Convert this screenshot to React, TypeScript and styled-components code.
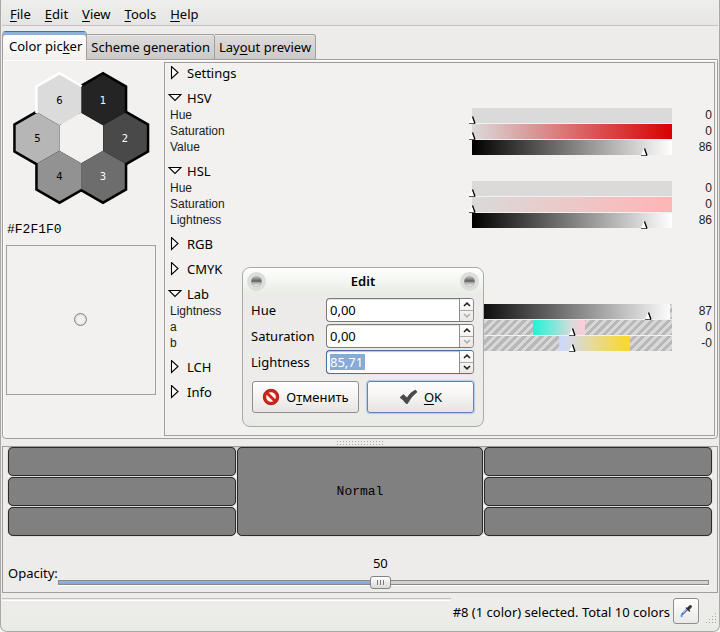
import React, { useState } from 'react';
import styled, { createGlobalStyle, css } from 'styled-components';

const GlobalStyle = createGlobalStyle`
  *, *::before, *::after { box-sizing: border-box; }
  body {
    margin: 0;
    background: #f4f5f3;
    color: #000;
    font: 13px/20px "Noto Sans", "Open Sans", sans-serif;
  }
  button, input { font: inherit; color: inherit; margin: 0; }
  u { text-decoration-thickness: 1px; text-underline-offset: 2px; }
`;

const Window = styled.div`
  position: relative;
  display: flex;
  flex-direction: column;
  min-height: 100vh;
  padding: 0 1px;
  background: linear-gradient(#ececeb, #edecea 40px, #edecea calc(100% - 26px), #e9ece6);
  border: 1px solid #a9aaa8;
  border-top: 0;
  border-radius: 0 0 7px 7px;
`;

const MenuBar = styled.nav`
  display: flex;
  height: 26px;
  padding: 4px 1px 0;
  background: linear-gradient(#eef0ec, #e5e4e2);
  border-bottom: 1px solid #c4c3c1;
`;

const MenuItem = styled.button`
  padding: 0 7px;
  height: 20px;
  border: 0;
  background: none;
`;

const TabList = styled.div`
  display: flex;
  align-items: flex-end;
  height: 34px;
  margin-bottom: -1px;
  z-index: 1;
`;

const Tab = styled.button<{ $active?: boolean }>`
  height: 26px;
  padding: 0 4px;
  border: 1px solid #a19f9d;
  border-left-width: 0;
  border-radius: 0 3px 0 0;
  background: linear-gradient(#dddcda, #cccac8);
  box-shadow: inset 0 1px #ecebea;
  white-space: nowrap;
  ${(p) =>
    p.$active &&
    css`
      height: 29px;
      padding: 0 4px 0 6px;
      border-color: #4a6f9f #a19f9d transparent;
      border-left-width: 1px;
      border-bottom: 0;
      border-radius: 4px 4px 0 0;
      background: linear-gradient(#fff, #f2f1ef);
      box-shadow: inset 0 3px #8cb0dc;
    `}
`;

const MainPanel = styled.main`
  display: flex;
  flex: 1;
  padding: 2px 2px 2px 3px;
  background: #f2f1ef;
  border: 1px solid #a19f9d;
  border-radius: 0 0 4px 4px;
  box-shadow: inset 1px 1px #fff;
`;

const SidePane = styled.section`
  display: flex;
  flex-direction: column;
  flex: none;
  width: 158px;
  padding-top: 8px;
`;

const Wheel = styled.svg`
  display: block;
  width: 150px;
  height: 138px;
`;

const HexValue = styled.div`
  margin: 12px 0 5px 1px;
  font: 13px/20px "Liberation Mono", monospace;
`;

const Field = styled.div`
  display: grid;
  place-items: center;
  width: 150px;
  height: 150px;
  padding: 0 2px 2px 0;
  border: 1px solid #a19f9d;
`;

const FieldMarker = styled.span`
  width: 13px;
  height: 13px;
  border: 1px solid #858585;
  border-radius: 50%;
  background: #f2f1ef;
  box-shadow: inset 0 0 2px #aaa;
`;

const Groups = styled.section`
  display: flex;
  flex-direction: column;
  flex: 1;
  gap: 5px;
  min-width: 0;
  min-height: 374px;
  padding: 0 2px 0 5px;
  border: 1px solid #a19f9d;
`;

const GroupHeader = styled.button`
  display: flex;
  align-items: center;
  width: 100%;
  height: 20px;
  padding: 0;
  border: 0;
  background: none;
  text-align: left;
`;

const Expander = styled.svg`
  flex: none;
  width: 14px;
  height: 14px;
  margin: 0 5px 0 -2px;
`;

const Row = styled.label`
  display: grid;
  grid-template-columns: 1fr 200px 40px;
  align-items: center;
  height: 16px;
  font: 12px/15px "Liberation Sans", Arial, sans-serif;
  color: #1c1c1c;
`;

const RowName = styled.span`
  padding-bottom: 1px;
`;

const Bar = styled.span<{ $fill: string }>`
  position: relative;
  height: 15px;
  margin-bottom: 1px;
  background: ${(p) => p.$fill};
`;

const BarInput = styled.input`
  position: absolute;
  inset: 0;
  width: 100%;
  height: 100%;
  opacity: 0;
`;

const Marker = styled.svg`
  position: absolute;
  top: 8px;
  z-index: 1;
  width: 8px;
  height: 8px;
  transform: translateX(-4px);
  pointer-events: none;
`;

const RowValue = styled.output`
  padding-bottom: 1px;
  text-align: right;
`;

const Grip = styled.div`
  width: 48px;
  height: 6px;
  margin: 1px auto 0;
  background: radial-gradient(circle, #a5a4a2 0 1px, transparent 1px) 0 0 / 3px 3px;
`;

const BottomPanel = styled.section`
  padding: 0 5px 1px;
  border: 1px solid #a19f9d;
`;

const Swatches = styled.div`
  display: grid;
  grid-template-columns: 228fr 247fr 228fr;
  grid-template-rows: repeat(3, 29px);
  gap: 1px;
  background: linear-gradient(#c4c3c1, #f6f5f4 3px);
`;

const Swatch = styled.button<{ $tall?: boolean }>`
  padding: 0;
  border: 1px solid #2b2b2b;
  border-radius: 5px;
  background: #808080;
  box-shadow: 0 0 1px #666;
  font: 13px/20px "Liberation Mono", monospace;
  ${(p) => p.$tall && css`grid-row: 1 / span 3; grid-column: 2;`}
`;

const OpacityRow = styled.div`
  display: grid;
  grid-template-columns: 50px 1fr;
  align-items: center;
  margin-top: 17px;
  padding-right: 3px;
`;

const OpacityLabel = styled.label`
  padding-top: 2px;
`;

const OpacityScale = styled.div`
  display: flex;
  flex-direction: column;
`;

const OpacityValue = styled.output`
  width: 21px;
  text-align: center;
`;

const OpacityInput = styled.input`
  display: block;
  appearance: none;
  width: 100%;
  height: 18px;
  background: none;
  &::-webkit-slider-runnable-track {
    height: 5px;
    border: 1px solid #8b8a88;
    background:
      linear-gradient(#4f78ac 1px, #93b6df 1px, #80a6d4 calc(100% - 1px), #4f78ac calc(100% - 1px)) 0 0 / var(--fill) 100% no-repeat border-box,
      #d2d2ce;
    box-shadow: 0 1px #fff;
  }
  &::-webkit-slider-thumb {
    appearance: none;
    width: 21px;
    height: 13px;
    margin-top: -5px;
    border: 1px solid #858483;
    border-radius: 3px;
    background:
      linear-gradient(#777, #777) 6px 3px / 1px 5px no-repeat,
      linear-gradient(#777, #777) 9px 3px / 1px 5px no-repeat,
      linear-gradient(#777, #777) 12px 3px / 1px 5px no-repeat,
      linear-gradient(#fff, #dad9d7);
  }
`;

const StatusBar = styled.footer`
  display: flex;
  height: 38px;
  padding: 5px 0 0;
`;

const Progress = styled.div`
  flex: 1;
  height: 3px;
  border-top: 1px solid #c1c0be;
  border-bottom: 1px solid #fff;
`;

const StatusText = styled.span`
  padding: 4px 3px 0 2px;
  white-space: nowrap;
`;

const PickerButton = styled.button`
  display: grid;
  place-items: center;
  width: 26px;
  height: 26px;
  padding: 0;
  border: 1px solid #8f8e8c;
  border-radius: 3px;
  background: linear-gradient(#fff, #e9e8e7);
`;

const ResizeGrip = styled.svg`
  width: 12px;
  height: 12px;
  margin: 15px 0 0 7px;
`;

const Dialog = styled.div`
  position: absolute;
  top: 267px;
  left: 241px;
  z-index: 2;
  width: 242px;
  padding: 0 9px 13px 8px;
  background: linear-gradient(#fff, #e8ede4 26px, #ecebea 28px, #edecea calc(100% - 20px), #e8ece5);
  border: 1px solid #a9aba8;
  border-radius: 8px;
`;

const TitleBar = styled.div`
  display: flex;
  align-items: center;
  justify-content: space-between;
  height: 26px;
  margin: 0 -5px 3px -4px;
`;

const DialogTitle = styled.h2`
  margin: 0;
  font: 600 13px/20px "Noto Sans", "Open Sans", sans-serif;
`;

const Orb = styled.button`
  width: 19px;
  height: 19px;
  padding: 0;
  border: 4px solid #dcdedb;
  border-radius: 50%;
  background: radial-gradient(ellipse at 50% 50%, transparent 55%, #999 75%), linear-gradient(#c8c8c8, #5c5c5c 48%, #a0a0a0 56%, #fff);
  background-clip: padding-box;
  background-color: #dcdedb;
`;

const SpinRow = styled.div`
  display: grid;
  grid-template-columns: 1fr 148px;
  align-items: center;
  height: 26px;
`;

const SpinBox = styled.div<{ $active?: boolean }>`
  display: flex;
  height: 24px;
  border: 1px solid ${(p) => (p.$active ? '#4a719f' : '#7b7a78')};
  border-right-color: #8f8e8c;
  border-radius: 4px;
  background: #fff;
  box-shadow: ${(p) => (p.$active ? 'inset 0 1px 1px #a9c5e6, 0 0 1px #aaa' : 'inset 0 1px #e4e3e2')};
  overflow: hidden;
`;

const SpinInput = styled.input<{ $selected?: boolean }>`
  flex: ${(p) => (p.$selected ? '0 0 35px' : '1')};
  min-width: 0;
  height: 16px;
  margin: 3px 0 3px 3px;
  padding: 0;
  border: 0;
  outline: 0;
  background: ${(p) => (p.$selected ? '#86abd9' : 'transparent')};
  color: ${(p) => (p.$selected ? '#fff' : '#000')};
`;

const Stepper = styled.div`
  display: flex;
  flex-direction: column;
  flex: none;
  width: 14px;
  margin-left: auto;
  border-left: 1px solid #8f8e8c;
  background: linear-gradient(#fff, #e9e8e7);
`;

const Step = styled.button<{ $dim?: boolean }>`
  display: grid;
  place-items: center;
  flex: 1;
  min-height: 0;
  padding: 0;
  border: 0;
  background: none;
  color: ${(p) => (p.$dim ? '#b0afad' : '#222')};
  & + & { border-top: 1px solid #a9a8a6; }
`;

const Actions = styled.div`
  display: grid;
  grid-template-columns: 1fr 1fr;
  gap: 8px;
  margin: 6px 0 0 1px;
`;

const ActionButton = styled.button<{ $primary?: boolean }>`
  display: flex;
  align-items: center;
  justify-content: center;
  gap: 6px;
  height: 32px;
  padding: 0;
  border: 1px solid ${(p) => (p.$primary ? '#5f83b3' : '#8f8e8c')};
  border-radius: 3px;
  background: linear-gradient(#fff, #f4f3f2 50%, #e6e5e3);
  box-shadow: ${(p) => (p.$primary ? '0 0 1px 1px #b7cae2' : 'none')};
`;

const hexPoints = (cx: number, cy: number) =>
  [[0, -25.3], [21.8, -12.7], [21.8, 12.7], [0, 25.3], [-21.8, 12.7], [-21.8, -12.7]]
    .map(([x, y]) => `${cx + x},${cy + y}`)
    .join(' ');

const cells = [
  { n: 1, x: 98, y: 30, fill: '#242424', ink: '#fff' },
  { n: 2, x: 120, y: 68, fill: '#494949', ink: '#fff' },
  { n: 3, x: 98, y: 106, fill: '#6d6d6d', ink: '#fff' },
  { n: 4, x: 54.5, y: 106, fill: '#929292', ink: '#000' },
  { n: 5, x: 32.5, y: 68, fill: '#b6b6b6', ink: '#000' },
  { n: 6, x: 54.5, y: 30, fill: '#dbdbdb', ink: '#000' },
];

function ColorWheel() {
  return (
    <Wheel viewBox="1 0 150 138" role="img" aria-label="Color wheel">
      {cells.filter((c) => c.n !== 6).map((c) => (
        <polygon key={c.n} points={hexPoints(c.x, c.y)} fill="none" stroke="#000" strokeWidth="5" />
      ))}
      <path d="M32.7 43V17.3L54.5 4.7 76.2 17.3" fill="none" stroke="#fff" strokeWidth="5" />
      <polygon points={hexPoints(76.2, 68)} fill="#f2f1f0" />
      {cells.map((c) => (
        <g key={c.n}>
          <polygon points={hexPoints(c.x, c.y)} fill={c.fill} />
          <text
            x={c.x}
            y={c.y + 4}
            textAnchor="middle"
            fill={c.ink}
            fontFamily="DejaVu Sans, sans-serif"
            fontSize="10"
          >
            {c.n}
          </text>
        </g>
      ))}
    </Wheel>
  );
}

interface Channel {
  name: string;
  value: number;
  text?: string;
  min?: number;
  max?: number;
  fill: string;
}

const hatch = 'repeating-linear-gradient(135deg, #b8b8b8 0 3px, #d8d8d8 3px 6px)';
const groups: { name: string; channels?: Channel[] }[] = [
  { name: 'Settings' },
  {
    name: 'HSV',
    channels: [
      { name: 'Hue', value: 0, fill: '#dadada' },
      { name: 'Saturation', value: 0, fill: 'linear-gradient(90deg, #dadada, #da0000)' },
      { name: 'Value', value: 86, fill: 'linear-gradient(90deg, #000, #fff)' },
    ],
  },
  {
    name: 'HSL',
    channels: [
      { name: 'Hue', value: 0, fill: '#dadada' },
      { name: 'Saturation', value: 0, fill: 'linear-gradient(90deg, #dadada, #ffb5b5)' },
      { name: 'Lightness', value: 86, fill: 'linear-gradient(90deg, #000, #fff)' },
    ],
  },
  { name: 'RGB' },
  { name: 'CMYK' },
  {
    name: 'Lab',
    channels: [
      { name: 'Lightness', value: 87, max: 99, fill: `linear-gradient(90deg, #000, #fbfbfb) 0 0 / 99% 100% no-repeat, ${hatch}` },
      { name: 'a', value: 0, min: -100, fill: `linear-gradient(90deg, #1cf5d6, #dadada 75%, #ffccd8) 61px 0 / 52px 100% no-repeat, ${hatch}` },
      { name: 'b', value: 0, text: '-0', min: -100, fill: `linear-gradient(90deg, #c8d8ff, #dadada 20%, #fbd821) 87px 0 / 71px 100% no-repeat, ${hatch}` },
    ],
  },
  { name: 'LCH' },
  { name: 'Info' },
];

function ChannelRow({ channel }: { channel: Channel }) {
  const { name, text, min = 0, max = 100, fill } = channel;
  const [value, setValue] = useState(channel.value);
  return (
    <Row>
      <RowName>{name}</RowName>
      <Bar $fill={fill}>
        <Marker viewBox="0 0 8 8" style={{ left: `${((value - min) / (max - min)) * 100}%` }}>
          <path d="M4 0 1 7h5.500z" fill="#fff" />
          <path d="M1 7.5h6" stroke="#555" />
          <path d="M4.500 0.500 7 7.500" stroke="#000" strokeWidth="1.3" />
        </Marker>
        <BarInput type="range" min={min} max={max} value={value} onChange={(e) => setValue(Number(e.target.value))} />
      </Bar>
      <RowValue>{value === channel.value && text ? text : value}</RowValue>
    </Row>
  );
}

function Group({ name, channels }: { name: string; channels?: Channel[] }) {
  return (
    <div>
      <GroupHeader type="button" aria-expanded={!!channels}>
        <Expander viewBox="0 0 14 14" fill="#fff" stroke="#000" strokeWidth="1.1">
          {channels ? <path d="M1 3.5h12L7 9.5z" /> : <path d="M3.5 0.5v12L10 6.5z" />}
        </Expander>
        {name}
      </GroupHeader>
      {channels?.map((c) => <ChannelRow key={c.name} channel={c} />)}
    </div>
  );
}

function SpinField({ id, label, initial, selected }: { id: string; label: string; initial: string; selected?: boolean }) {
  const [value, setValue] = useState(initial);
  const step = (d: number) =>
    setValue(Math.max(0, Number(value.replace(',', '.')) + d).toFixed(2).replace('.', ','));
  return (
    <SpinRow>
      <label htmlFor={id}>{label}</label>
      <SpinBox $active={selected}>
        <SpinInput id={id} $selected={selected} value={value} onChange={(e) => setValue(e.target.value)} />
        <Stepper>
          <Step type="button" aria-label={`Increase ${label}`} onClick={() => step(1)}>
            <svg width="8" height="5" viewBox="0 0 8 5" fill="none" stroke="currentColor" strokeWidth="1.6"><path d="M1 4 4 1.2 7 4" /></svg>
          </Step>
          <Step type="button" aria-label={`Decrease ${label}`} $dim={!selected} onClick={() => step(-1)}>
            <svg width="8" height="5" viewBox="0 0 8 5" fill="none" stroke="currentColor" strokeWidth="1.6"><path d="M1 1 4 3.8 7 1" /></svg>
          </Step>
        </Stepper>
      </SpinBox>
    </SpinRow>
  );
}

function EditDialog() {
  return (
    <Dialog role="dialog" aria-labelledby="edit-title">
      <TitleBar>
        <Orb type="button" aria-label="Window menu" />
        <DialogTitle id="edit-title">Edit</DialogTitle>
        <Orb type="button" aria-label="Close" />
      </TitleBar>
      <SpinField id="edit-hue" label="Hue" initial="0,00" />
      <SpinField id="edit-saturation" label="Saturation" initial="0,00" />
      <SpinField id="edit-lightness" label="Lightness" initial="85,71" selected />
      <Actions>
        <ActionButton type="button">
          <svg width="18" height="18" viewBox="0 0 18 18" fill="none">
            <circle cx="9" cy="9" r="6.4" fill="#fff" stroke="#cf2318" strokeWidth="3.2" />
            <path d="m4.5 4.5 9 9" stroke="#cf2318" strokeWidth="3" />
            <circle cx="9" cy="9" r="7.8" stroke="#a51510" strokeWidth=".6" />
          </svg>
          <span>О<u>т</u>менить</span>
        </ActionButton>
        <ActionButton type="button" $primary>
          <svg width="19" height="16" viewBox="0 0 19 16">
            <path d="M1 8.5 4.5 5.5 8 9Q11 3.5 16.5 1L18 3Q12 7.500 8.500 14.500H7Q4.500 10.500 1 8.500Z" fill="#484a4b" stroke="#303233" strokeWidth=".6" />
          </svg>
          <span><u>O</u>K</span>
        </ActionButton>
      </Actions>
    </Dialog>
  );
}

function OpacityControl() {
  const [value, setValue] = useState(50);
  const ratio = (value - 1) / 99;
  const sliderStyle = { '--fill': `${ratio * 100}%` } as React.CSSProperties;
  return (
    <OpacityRow>
      <OpacityLabel htmlFor="opacity">Opacity:</OpacityLabel>
      <OpacityScale>
        <OpacityValue htmlFor="opacity" style={{ marginLeft: `calc(${ratio} * (100% - 21px))` }}>{value}</OpacityValue>
        <OpacityInput id="opacity" type="range" min={1} max={100} value={value} style={sliderStyle} onChange={(e) => setValue(Number(e.target.value))} />
      </OpacityScale>
    </OpacityRow>
  );
}

export default function App() {
  return (
    <Window>
      <GlobalStyle />
      <MenuBar>
        {['File', 'Edit', 'View', 'Tools', 'Help'].map((m) => (
          <MenuItem key={m} type="button"><u>{m[0]}</u>{m.slice(1)}</MenuItem>
        ))}
      </MenuBar>
      <TabList role="tablist">
        <Tab type="button" role="tab" aria-selected $active>Color pic<u>k</u>er</Tab>
        <Tab type="button" role="tab" aria-selected={false}>Scheme generation</Tab>
        <Tab type="button" role="tab" aria-selected={false}>Lay<u>o</u>ut preview</Tab>
      </TabList>
      <MainPanel>
        <SidePane>
          <ColorWheel />
          <HexValue>#F2F1F0</HexValue>
          <Field><FieldMarker /></Field>
        </SidePane>
        <Groups>
          {groups.map((g) => <Group key={g.name} {...g} />)}
        </Groups>
      </MainPanel>
      <Grip />
      <BottomPanel>
        <Swatches>
          <Swatch type="button" aria-label="Top left" />
          <Swatch type="button" $tall>Normal</Swatch>
          <Swatch type="button" aria-label="Top right" />
          <Swatch type="button" aria-label="Middle left" />
          <Swatch type="button" aria-label="Middle right" />
          <Swatch type="button" aria-label="Bottom left" />
          <Swatch type="button" aria-label="Bottom right" />
        </Swatches>
        <OpacityControl />
      </BottomPanel>
      <StatusBar>
        <Progress />
        <StatusText>#8 (1 color) selected. Total 10 colors</StatusText>
        <PickerButton type="button" aria-label="Pick color">
          <svg width="14" height="16" viewBox="0 0 16 16" fill="none" strokeLinecap="round">
            <path d="M9.500 6 4 11.500" stroke="#5360b5" strokeWidth="2.400" />
            <path d="M9 6 5 10" stroke="#d6dcf8" strokeWidth="1" />
            <path d="m8.500 4.500 3.500 3.500" stroke="#333" strokeWidth="1.600" />
            <path d="m11 5 2-2" stroke="#333" strokeWidth="3.400" />
            <path d="M3 12.500v1.500" stroke="#3ba7e8" strokeWidth="2.200" />
          </svg>
        </PickerButton>
        <ResizeGrip viewBox="0 0 12 12" fill="#a5a4a2">
          {[0, 1, 2, 3].flatMap((r) =>
            [0, 1, 2, 3].filter((c) => c >= 3 - r).map((c) => (
              <rect key={`${r}-${c}`} x={c * 3} y={r * 3} width="1" height="1" />
            )),
          )}
        </ResizeGrip>
      </StatusBar>
      <EditDialog />
    </Window>
  );
}
